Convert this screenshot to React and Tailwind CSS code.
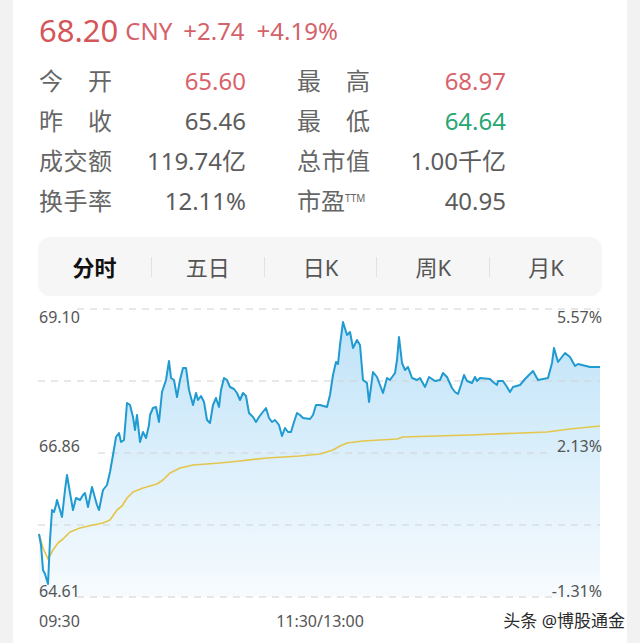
const price = [[39,534],[41,545],[43,570],[45,574],[48,584],[50,540],[52,510],[54,512],[56,505],[57,500],[60,510],[62,517],[65,490],[67,475],[70,493],[73,510],[76,498],[78,499],[80,500],[83,495],[85,493],[88,507],[92,487],[95,498],[97,505],[99,510],[103,490],[107,485],[110,472],[113,455],[116,437],[119,433],[121,442],[124,440],[127,403],[130,405],[133,417],[135,430],[137,415],[140,442],[143,432],[146,438],[149,425],[150,415],[153,408],[156,407],[159,422],[162,392],[166,380],[169,361],[171,378],[174,380],[177,397],[180,380],[183,368],[186,368],[189,390],[193,405],[196,393],[198,400],[201,396],[204,402],[207,420],[210,423],[213,405],[216,398],[219,407],[221,390],[224,378],[227,380],[230,387],[234,389],[237,393],[240,400],[243,393],[246,396],[249,413],[253,417],[256,422],[259,417],[262,413],[266,408],[269,418],[272,422],[275,420],[279,425],[282,436],[285,428],[288,432],[291,432],[294,422],[297,413],[300,415],[303,418],[310,419],[313,415],[316,405],[320,405],[327,407],[330,395],[333,375],[336,362],[338,364],[340,345],[343,322],[347,335],[350,332],[353,348],[357,340],[360,345],[363,380],[367,383],[369,402],[373,372],[377,377],[380,385],[383,393],[387,378],[390,380],[395,373],[397,360],[399,337],[402,363],[405,370],[408,367],[412,378],[417,380],[420,378],[425,387],[429,377],[435,381],[440,380],[443,373],[447,377],[452,388],[455,392],[458,394],[461,385],[464,375],[467,381],[472,383],[475,377],[477,381],[480,378],[490,379],[493,382],[497,385],[498,381],[503,381],[507,387],[510,392],[513,387],[520,385],[525,379],[533,371],[538,380],[548,378],[552,363],[554,348],[558,362],[565,353],[570,357],[575,366],[578,364],[590,367],[600,367]];

const avg = [[39,534],[43,548],[48,559],[53,550],[58,543],[63,539],[70,532],[80,528],[93,525],[103,523],[110,520],[117,510],[122,506],[127,498],[133,492],[143,488],[157,484],[163,480],[170,473],[180,468],[193,465],[220,463],[240,461],[267,458],[300,456],[320,454],[333,450],[340,446],[347,443],[363,441],[397,439],[403,437],[470,435],[547,432],[570,429],[600,426]];

const toPath = (pts) => pts.map((p, i) => (i ? 'L' : 'M') + p[0] + ' ' + p[1]).join(' ');
const linePath = toPath(price);
const areaPath = linePath + ' L600 597 L39 597 Z';

const grid = [
  [309, 77, 600],
  [381, 38, 600],
  [453, 98, 553],
  [525, 38, 600],
  [597, 77, 552],
];

const leftRows = [
  { label: ['今', '开'], value: '65.60', color: 'text-[#d8636a]' },
  { label: ['昨', '收'], value: '65.46', color: 'text-[#5c5c5c]' },
  { label: ['成', '交', '额'], value: '119.74亿', color: 'text-[#5c5c5c]' },
  { label: ['换', '手', '率'], value: '12.11%', color: 'text-[#5c5c5c]' },
];
const rightRows = [
  { label: ['最', '高'], value: '68.97', color: 'text-[#d8636a]' },
  { label: ['最', '低'], value: '64.64', color: 'text-[#27a673]' },
  { label: ['总', '市', '值'], value: '1.00千亿', color: 'text-[#5c5c5c]' },
  { ttm: true, value: '40.95', color: 'text-[#5c5c5c]' },
];

function Label({ row }) {
  if (row.ttm) {
    return (
      <span className="flex w-[73px] items-start text-[24px] leading-[24px] text-[#666]">
        <span>市盈</span>
        <span className="mt-[4px] text-[10px] leading-none">TTM</span>
      </span>
    );
  }
  return (
    <span className="flex w-[73px] justify-between text-[24px] leading-[24px] text-[#666]">
      {row.label.map((c, i) => (
        <span key={i}>{c}</span>
      ))}
    </span>
  );
}

function Cell({ row, w }) {
  return (
    <div className={`flex ${w} items-center justify-between`}>
      <Label row={row} />
      <span className={`text-[24px] leading-[24px] ${row.color}`}>{row.value}</span>
    </div>
  );
}

const tabs = ['分时', '五日', '日K', '周K', '月K'];

export default function App() {
  return (
    <div className="min-h-screen bg-[#f2f2f2] px-[13px] font-['Noto_Sans','Noto_Sans_CJK_SC',sans-serif]">
      <div className="relative h-[643px] bg-white px-[25px]">
        <div className="flex h-[61px] items-center pl-[1px]">
          <span className="text-[31px] leading-none text-[#d5565a]">68.20</span>
          <span className="ml-[7px] text-[24px] leading-none text-[#d4626a]">CNY</span>
          <span className="ml-[11px] text-[24px] leading-none text-[#d4626a]">+2.74</span>
          <span className="ml-[12px] text-[24px] leading-none text-[#d4626a]">+4.19%</span>
        </div>
        <div className="flex flex-col pl-[1px]">
          {leftRows.map((r, i) => (
            <div key={i} className="flex h-[40px] items-center">
              <Cell row={r} w="w-[207px]" />
              <div className="w-[51px]" />
              <Cell row={rightRows[i]} w="w-[209px]" />
            </div>
          ))}
        </div>
        <div className="mt-[16px] flex h-[59px] items-center rounded-[12px] bg-[#f6f6f6]">
          {tabs.map((t, i) => (
            <div key={t} className="flex flex-1 items-center">
              {i > 0 && <span className="h-[20px] w-px bg-[#e2e2e2]" />}
              <span
                className={`flex-1 text-center text-[22px] leading-none ${
                  i === 0 ? 'font-bold text-[#111]' : 'text-[#555]'
                }`}
              >
                {t}
              </span>
            </div>
          ))}
        </div>
        <div className="relative h-[310px]">
          <svg width="564" height="310" viewBox="38 296 564 310" className="block">
            <defs>
              <linearGradient id="fillg" x1="0" y1="320" x2="0" y2="597" gradientUnits="userSpaceOnUse">
                <stop offset="0" stopColor="#c0e3f8" />
                <stop offset="1" stopColor="#f7fbfe" />
              </linearGradient>
            </defs>
            <path d={areaPath} fill="url(#fillg)" />
            {grid.map(([y, x1, x2]) => (
              <line
                key={y}
                x1={x1}
                x2={x2}
                y1={y}
                y2={y}
                stroke="#d2d2d2"
                strokeWidth="1.2"
                strokeDasharray="7 6"
              />
            ))}
            <path d={toPath(avg)} fill="none" stroke="#e5c64c" strokeWidth="1.7" strokeLinejoin="round" />
            <path d={linePath} fill="none" stroke="#1f9bd1" strokeWidth="2" strokeLinejoin="round" />
          </svg>
          <span className="absolute left-[1px] top-[13px] text-[16px] leading-[16px] text-[#555]">69.10</span>
          <span className="absolute left-[1px] top-[142px] text-[16px] leading-[16px] text-[#555]">66.86</span>
          <span className="absolute left-[1px] top-[287px] text-[16px] leading-[16px] text-[#555]">64.61</span>
          <span className="absolute right-0 top-[13px] text-[16px] leading-[16px] text-[#555]">5.57%</span>
          <span className="absolute right-0 top-[142px] text-[16px] leading-[16px] text-[#555]">2.13%</span>
          <span className="absolute right-0 top-[287px] text-[16px] leading-[16px] text-[#555]">-1.31%</span>
        </div>
        <div className="grid h-[30px] grid-cols-3 items-center text-[16px] leading-none text-[#555]">
          <span className="pl-[1px]">09:30</span>
          <span className="text-center">11:30/13:00</span>
          <span />
        </div>
        <span className="absolute bottom-[14px] right-[2px] text-[17px] leading-[17px] text-[#2b2b2b]">
          头条 @博股通金
        </span>
      </div>
    </div>
  );
}
